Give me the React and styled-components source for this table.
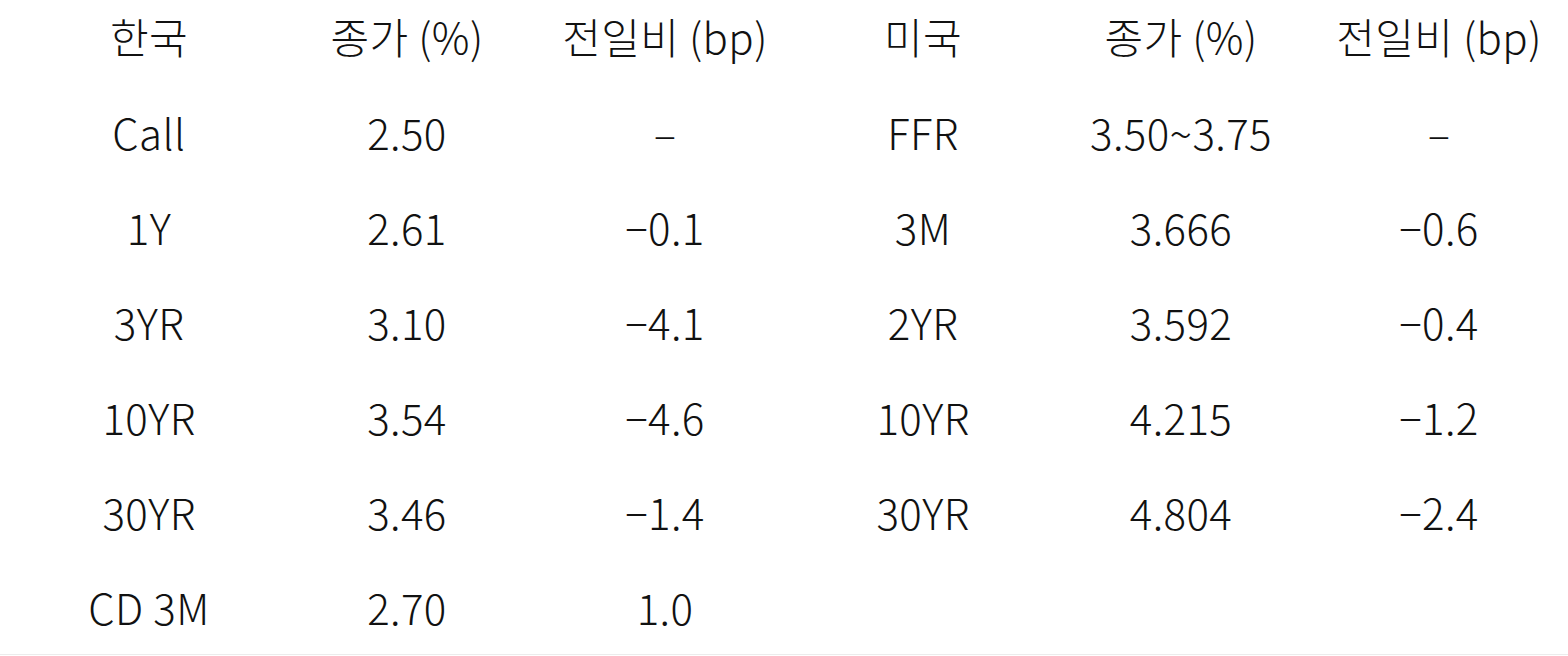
import styled, { createGlobalStyle } from 'styled-components'

const GlobalStyle = createGlobalStyle`
  html, body { margin: 0; padding: 0; background: #fff; }
  body { font-family: "Noto Sans CJK KR", "Noto Sans", sans-serif; color: #111; }
`

const Table = styled.div`
  display: grid;
  grid-template-columns: repeat(6, 1fr);
  padding: 0 0 0 20px;
  border-bottom: 1px solid #ececec;
`

const Cell = styled.div`
  height: ${(p) => (p.head ? '84px' : '95px')};
  display: flex;
  align-items: center;
  justify-content: center;
  font-size: 42px;
  font-weight: 300;
  line-height: 1;
  letter-spacing: 0.4px;
  padding-bottom: ${(p) => (p.head ? '12px' : '0')};
  box-sizing: border-box;
`

const head = ['한국', '종가 (%)', '전일비 (bp)', '미국', '종가 (%)', '전일비 (bp)']
const rows = [
  ['Call', '2.50', '–', 'FFR', '3.50~3.75', '–'],
  ['1Y', '2.61', '−0.1', '3M', '3.666', '−0.6'],
  ['3YR', '3.10', '−4.1', '2YR', '3.592', '−0.4'],
  ['10YR', '3.54', '−4.6', '10YR', '4.215', '−1.2'],
  ['30YR', '3.46', '−1.4', '30YR', '4.804', '−2.4'],
  ['CD 3M', '2.70', '1.0', '', '', ''],
]

function App() {
  return (
    <>
      <GlobalStyle />
      <Table>
        {head.map((h, i) => <Cell head key={'h' + i}>{h}</Cell>)}
        {rows.map((r, ri) => r.map((c, ci) => <Cell key={ri + '-' + ci}>{c}</Cell>))}
      </Table>
    </>
  )
}

export default App
